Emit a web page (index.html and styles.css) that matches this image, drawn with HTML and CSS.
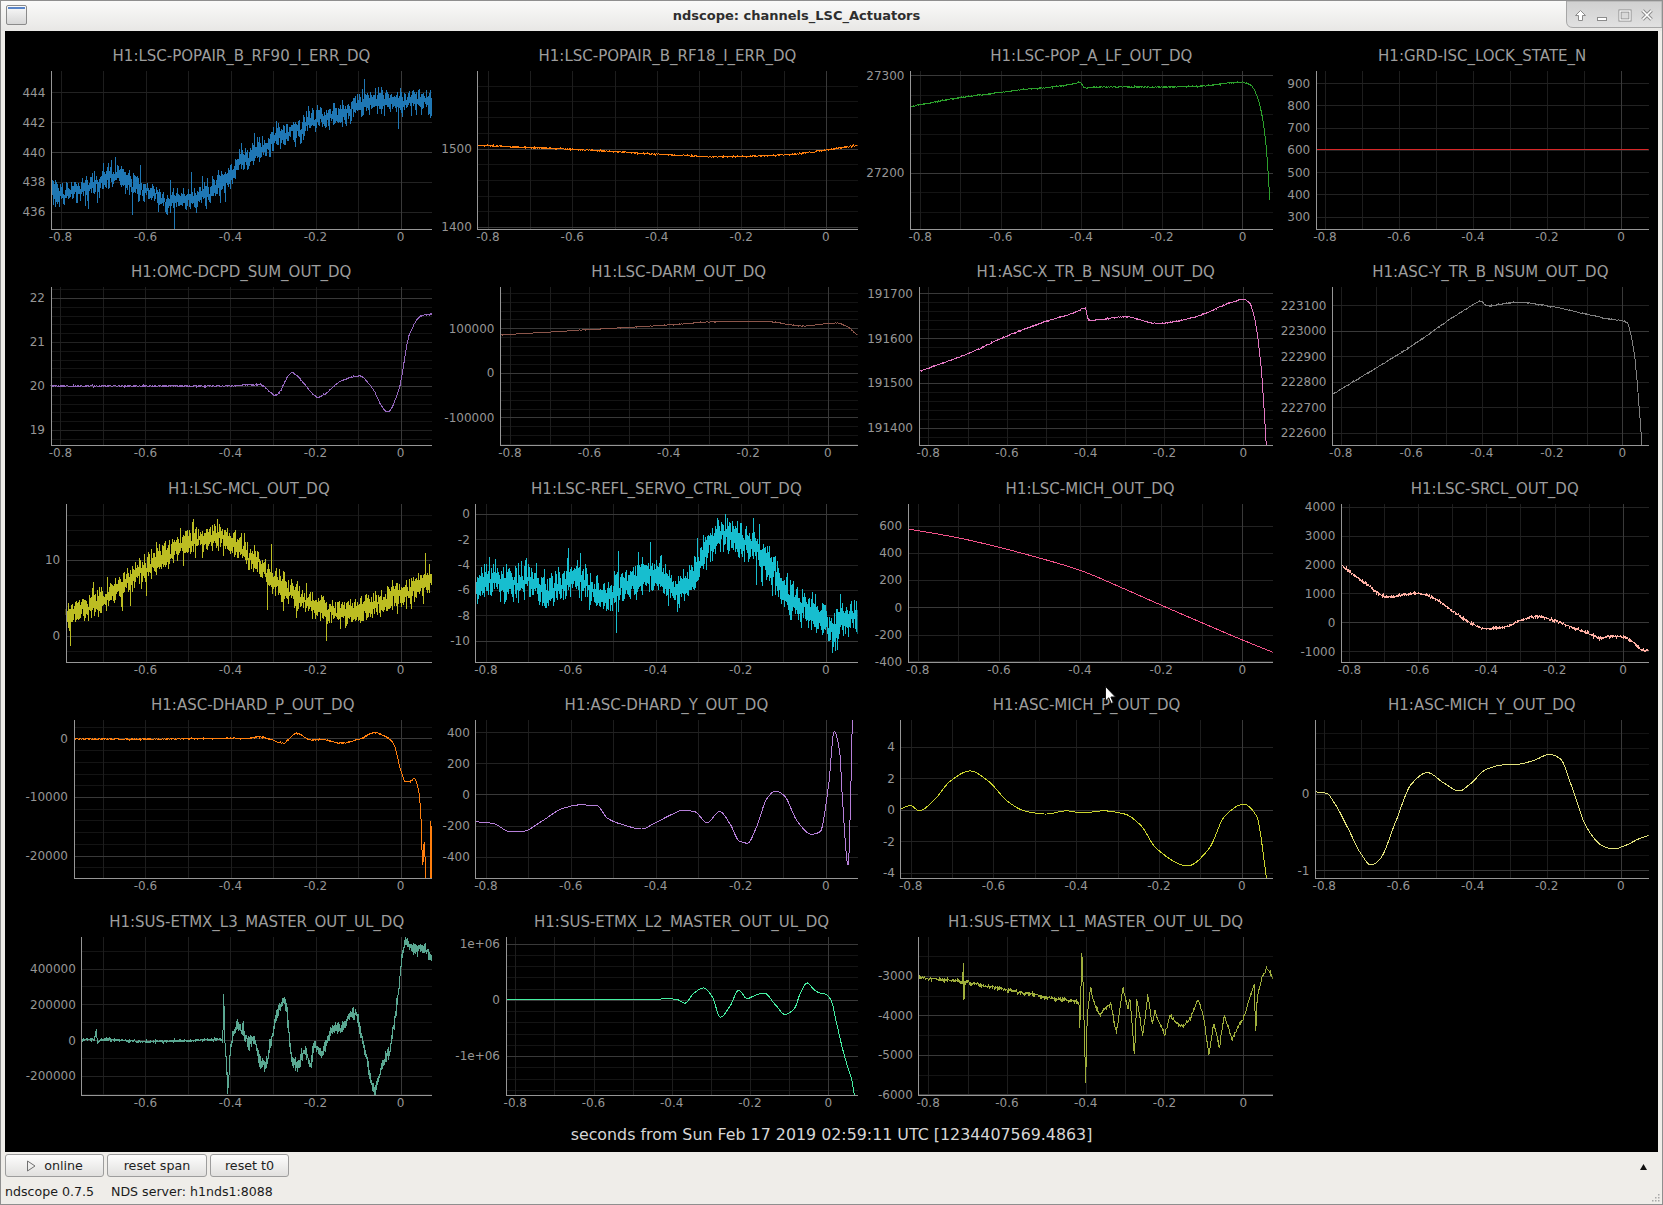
FILE: index.html
```html
<!DOCTYPE html>
<html lang="en">
<head>
<meta charset="utf-8">
<title>ndscope: channels_LSC_Actuators</title>
<link rel="stylesheet" href="styles.css">
</head>
<body>
<div class="window">
  <div class="titlebar">
    <div class="win-icon">
      <svg width="21" height="20" viewBox="0 0 21 20"><defs><linearGradient id="wi" x1="0" y1="0" x2="0" y2="1"><stop offset="0" stop-color="#fbfbfb"/><stop offset="1" stop-color="#d6d6d6"/></linearGradient></defs><rect x="0.5" y="0.5" width="20" height="19" rx="1.5" fill="url(#wi)" stroke="#8a8a8a"/><rect x="2" y="2" width="17" height="2" fill="#5a85c8"/></svg>
    </div>
    <div class="win-title">ndscope: channels_LSC_Actuators</div>
    <div class="win-controls">
      <svg width="96" height="27" viewBox="0 0 96 27"><defs><linearGradient id="wc" x1="0" y1="0" x2="0" y2="1"><stop offset="0" stop-color="#d0d0d0"/><stop offset="1" stop-color="#e1e1e1"/></linearGradient></defs><path d="M0.5,0 V20 Q0.5,26.5 7,26.5 H96 V0 Z" fill="url(#wc)" stroke="#a6a6a6"/><path d="M14.5,9.5 L19.5,14.5 H16.5 V19.5 H12.5 V14.5 H9.5 Z" fill="#fff" stroke="#8c8c8c"/><rect x="31.5" y="16.5" width="9" height="3" fill="#fff" stroke="#8c8c8c"/><rect x="54" y="10" width="10" height="9" fill="none" stroke="#8c8c8c" stroke-width="3"/><rect x="54" y="10" width="10" height="9" fill="none" stroke="#fff" stroke-width="1.3"/><path d="M76.5,9.5 L85.5,18.5 M85.5,9.5 L76.5,18.5" stroke="#8c8c8c" stroke-width="3.6"/><path d="M76.5,9.5 L85.5,18.5 M85.5,9.5 L76.5,18.5" stroke="#fff" stroke-width="1.6"/></svg>
    </div>
  </div>
  <div class="main">
    <div class="scope">
      <div class="plots">
        <div class="plot c1"><div class="plot-title">H1:LSC-POPAIR_B_RF90_I_ERR_DQ</div><svg class="plot-svg"></svg></div>
        <div class="plot c2"><div class="plot-title">H1:LSC-POPAIR_B_RF18_I_ERR_DQ</div><svg class="plot-svg"></svg></div>
        <div class="plot c3"><div class="plot-title">H1:LSC-POP_A_LF_OUT_DQ</div><svg class="plot-svg"></svg></div>
        <div class="plot c4"><div class="plot-title">H1:GRD-ISC_LOCK_STATE_N</div><svg class="plot-svg"></svg></div>

        <div class="plot c1"><div class="plot-title">H1:OMC-DCPD_SUM_OUT_DQ</div><svg class="plot-svg"></svg></div>
        <div class="plot c2"><div class="plot-title">H1:LSC-DARM_OUT_DQ</div><svg class="plot-svg"></svg></div>
        <div class="plot c3"><div class="plot-title">H1:ASC-X_TR_B_NSUM_OUT_DQ</div><svg class="plot-svg"></svg></div>
        <div class="plot c4"><div class="plot-title">H1:ASC-Y_TR_B_NSUM_OUT_DQ</div><svg class="plot-svg"></svg></div>

        <div class="plot c1"><div class="plot-title">H1:LSC-MCL_OUT_DQ</div><svg class="plot-svg"></svg></div>
        <div class="plot c2"><div class="plot-title">H1:LSC-REFL_SERVO_CTRL_OUT_DQ</div><svg class="plot-svg"></svg></div>
        <div class="plot c3"><div class="plot-title">H1:LSC-MICH_OUT_DQ</div><svg class="plot-svg"></svg></div>
        <div class="plot c4"><div class="plot-title">H1:LSC-SRCL_OUT_DQ</div><svg class="plot-svg"></svg></div>

        <div class="plot c1"><div class="plot-title">H1:ASC-DHARD_P_OUT_DQ</div><svg class="plot-svg"></svg></div>
        <div class="plot c2"><div class="plot-title">H1:ASC-DHARD_Y_OUT_DQ</div><svg class="plot-svg"></svg></div>
        <div class="plot c3"><div class="plot-title">H1:ASC-MICH_P_OUT_DQ</div><svg class="plot-svg"></svg></div>
        <div class="plot c4"><div class="plot-title">H1:ASC-MICH_Y_OUT_DQ</div><svg class="plot-svg"></svg></div>

        <div class="plot c1"><div class="plot-title">H1:SUS-ETMX_L3_MASTER_OUT_UL_DQ</div><svg class="plot-svg"></svg></div>
        <div class="plot c2"><div class="plot-title">H1:SUS-ETMX_L2_MASTER_OUT_UL_DQ</div><svg class="plot-svg"></svg></div>
        <div class="plot c3"><div class="plot-title">H1:SUS-ETMX_L1_MASTER_OUT_UL_DQ</div><svg class="plot-svg"></svg></div>
        <div class="plot-empty"></div>
      </div>
      <div class="xlabel">seconds from Sun Feb 17 2019 02:59:11 UTC [1234407569.4863]</div>
    </div>
    <div class="toolbar">
      <button class="btn btn-online" type="button"><svg width="10" height="12" viewBox="0 0 10 12"><path d="M1.5,1 L9,6 L1.5,11 Z" fill="none" stroke="#707070"/></svg><span>online</span></button>
      <button class="btn btn-span" type="button">reset span</button>
      <button class="btn btn-t0" type="button">reset t0</button>
      <span class="dock-arrow"><svg width="7" height="6" viewBox="0 0 7 6"><path d="M0,6 L3.5,0 L7,6 Z" fill="#111"/></svg></span>
    </div>
    <div class="status"><span>ndscope 0.7.5</span><span class="server">NDS server: h1nds1:8088</span></div>
  </div>
  <svg class="cursor" width="13" height="21" viewBox="0 0 13 21"><path d="M1.5,1.5 L1.5,16 L4.8,12.8 L7.2,18.5 L9.3,17.6 L6.9,12 L11.5,12 Z" fill="#fff" stroke="#111" stroke-linejoin="round"/></svg>
  <svg class="grip" width="11" height="11" viewBox="0 0 11 11"><g fill="#a9a9a9"><rect x="8" y="2" width="1.5" height="1.5"/><rect x="5" y="5" width="1.5" height="1.5"/><rect x="8" y="5" width="1.5" height="1.5"/><rect x="2" y="8" width="1.5" height="1.5"/><rect x="5" y="8" width="1.5" height="1.5"/><rect x="8" y="8" width="1.5" height="1.5"/></g></svg>
</div>
<script src="app.js"></script>
</body>
</html>
```

FILE: styles.css
```css
* { box-sizing: border-box; }
html, body { margin: 0; padding: 0; }
body {
  width: 1663px;
  height: 1205px;
  overflow: hidden;
  background: #efede9;
  font-family: "DejaVu Sans", "Liberation Sans", sans-serif;
}
.window {
  position: relative;
  width: 1663px;
  height: 1205px;
  border: 1px solid #8f8f8f;
  background: #efede9;
  display: flex;
  flex-direction: column;
}
.titlebar {
  flex: none;
  height: 30px;
  display: flex;
  background: linear-gradient(#fafaf9, #e8e7e5);
}
.win-icon { flex: none; width: 26px; padding: 4px 0 0 5px; }
.win-icon svg { display: block; }
.win-title {
  flex: 1;
  text-align: center;
  font-size: 13px;
  font-weight: bold;
  line-height: 29px;
  color: #2e2e2e;
  white-space: nowrap;
}
.win-controls { flex: none; width: 96px; height: 27px; }
.win-controls svg { display: block; }

.main {
  flex: 1;
  min-height: 0;
  display: flex;
  flex-direction: column;
  padding: 0 4px;
}
.scope {
  flex: none;
  height: 1121px;
  background: #000;
  display: flex;
  flex-direction: column;
}
.plots {
  display: grid;
  grid-template-columns: 432px 425px 415px 381px;
  grid-template-rows: 216px 217px 216px 217px 216px;
}
.plot { display: flex; flex-direction: column; min-width: 0; min-height: 0; }
.c1 { --r: 5px; }
.c2 { --r: 4.5px; }
.c3 { --r: 4.3px; }
.c4 { --r: 9.3px; }
.plot-title {
  flex: none;
  height: 40px;
  padding: 17px var(--r) 0 var(--l, 40px);
  font-size: 15px;
  line-height: 16px;
  color: #9d9d9d;
  text-align: center;
  white-space: nowrap;
}
.plot-svg { display: block; width: 100%; flex: 1; overflow: visible; }
.plot-svg text {
  font-family: "DejaVu Sans", sans-serif;
  font-size: 12px;
  fill: #969696;
}
.xlabel {
  flex: 1;
  padding-top: 14px;
  font-size: 15.85px;
  line-height: 16px;
  text-align: center;
  color: #d6d6d6;
  white-space: nowrap;
}

.toolbar {
  flex: none;
  height: 27px;
  display: flex;
  align-items: flex-start;
  padding-top: 2px;
  gap: 3px;
}
.btn {
  height: 23px;
  margin: 0;
  padding: 0;
  border: 1px solid #9d9d9d;
  border-radius: 3px;
  background: linear-gradient(#fdfdfd, #e1e0de);
  font-family: "DejaVu Sans", sans-serif;
  font-size: 12.7px;
  color: #1e1e1e;
  display: flex;
  align-items: center;
  justify-content: center;
  gap: 8px;
}
.btn svg { display: block; }
.btn-online { width: 99px; }
.btn-span { width: 100px; }
.btn-t0 { width: 79px; }
.dock-arrow { margin-left: auto; margin-right: 11px; margin-top: 10px; }
.dock-arrow svg { display: block; }

.status {
  flex: 1;
  padding-top: 2px;
  font-size: 12.6px;
  line-height: 22px;
  color: #1b1b1b;
  white-space: nowrap;
}
.server { margin-left: 17px; }

.cursor { position: absolute; left: 1103px; top: 684px; }
.grip { position: absolute; right: 1px; bottom: 1px; }
```

FILE: app.js
```js
(function () {
  'use strict';
  var PH = 158;
  var COLR = [427, 420.5, 410.7, 371.7];
  var XMAX = [0.0741, 0.075, 0.075, 0.075];
  var GRID = { b: '#393939', l: '#222222', f: '#141414', x: '#1d1d1d' };

  var CFG = [
    /* row 1 */
    { L: 45.9, xmin: -0.8226, y: [434.87, 445.42], yl: 2, yb: 10, c: '#1f77b4', n: 1800, ns: 0.38, sp: 0.08,
      pts: [[-0.823,437.2],[-0.783,437.3],[-0.744,437.5],[-0.705,438.0],[-0.666,438.4],[-0.627,437.8],[-0.588,437.3],[-0.549,436.8],[-0.51,436.8],[-0.471,437.0],[-0.432,437.7],[-0.393,438.7],[-0.378,439.5],[-0.354,439.7],[-0.315,440.5],[-0.277,441.2],[-0.238,441.5],[-0.199,442.2],[-0.16,442.4],[-0.121,442.8],[-0.082,443.3],[-0.043,443.4],[-0.004,443.3],[0.035,443.5],[0.075,443.3]] },
    { L: 40.3, y: [1397.5, 1598.7], yl: 100, yb: 100, yf: 20, c: '#ff7f0e', n: 700, ns: 0.5,
      pts: [[-0.825,1504],[-0.6,1499],[-0.4,1493],[-0.25,1489.5],[-0.1,1492],[0.075,1504]] },
    { L: 48, y: [27142.5, 27304.4], yl: 100, yb: 100, yf: 20, c: '#2ca02c', n: 700, ns: 0.35,
      pts: [[-0.825,27268],[-0.7,27277],[-0.55,27285],[-0.42,27291],[-0.403,27293],[-0.392,27287],[-0.36,27288],[-0.2,27288],[-0.1,27289],[0,27293],[0.02,27290],[0.035,27280],[0.047,27262],[0.059,27226],[0.068,27172]] },
    { L: 38.7, y: [244.7, 955], yl: 100, yb: 1000, c: '#d62728', n: 2, m: 'l',
      pts: [[-0.83,600],[0.08,600]] },
    /* row 2 */
    { L: 45.5, xmin: -0.8235, y: [18.66, 22.25], yl: 1, yb: 2, yf: 0.2, c: '#9467bd', n: 800, ns: 0.008,
      pts: [[-0.825,20],[-0.4,20],[-0.36,20.03],[-0.33,20.03],[-0.294,19.79],[-0.255,20.3],[-0.222,20.0],[-0.195,19.75],[-0.136,20.13],[-0.096,20.23],[-0.07,20],[-0.03,19.41],[-0.004,19.92],[0.022,21.2],[0.05,21.6],[0.075,21.64]] },
    { L: 63, y: [-162000, 193000], yl: 100000, yb: 100000, yf: 20000, c: '#8c564b', n: 600, ns: 400,
      pts: [[-0.825,85200],[-0.6,97100],[-0.39,108300],[-0.28,115000],[-0.15,115000],[-0.064,105400],[0.021,112100],[0.045,106000],[0.075,85200]] },
    { L: 56.5, y: [191361, 191714.5], yl: 100, yb: 100, yf: 20, c: '#e377c2', n: 700, ns: 0.6,
      pts: [[-0.825,191525],[-0.7,191565],[-0.6,191605],[-0.5,191638],[-0.42,191660],[-0.402,191668],[-0.392,191640],[-0.35,191643],[-0.3,191648],[-0.22,191633],[-0.12,191648],[-0.03,191680],[0,191687],[0.015,191680],[0.03,191640],[0.045,191540],[0.056,191400],[0.06,191340]] },
    { L: 55, y: [222553, 223172], yl: 100, yb: 1000, c: '#7f7f7f', n: 700, ns: 1,
      pts: [[-0.825,222750],[-0.6,222940],[-0.45,223080],[-0.4,223115],[-0.385,223098],[-0.3,223112],[-0.2,223095],[-0.1,223065],[-0.03,223045],[0.0,223040],[0.015,223030],[0.025,222980],[0.035,222900],[0.048,222700],[0.056,222553]] },
    /* row 3 */
    { L: 60.7, xmin: -0.7878, y: [-3.41, 17.39], yl: 10, yb: 10, yf: 2, c: '#bcbd22', n: 2200, ns: 0.8, sp: 0.08,
      pts: [[-0.79,2.3],[-0.7,5],[-0.6,8.8],[-0.5,12.2],[-0.45,13],[-0.4,12.4],[-0.3,7.6],[-0.2,3.9],[-0.14,3],[-0.08,3.7],[0,5.3],[0.075,7.4]] },
    { L: 38.3, y: [-11.67, 0.78], yl: 2, yb: 10, c: '#17becf', n: 2200, ns: 0.62, sp: 0.08,
      pts: [[-0.825,-5.7],[-0.78,-5.2],[-0.74,-5.6],[-0.7,-5.2],[-0.66,-6.4],[-0.6,-5.2],[-0.56,-5.6],[-0.53,-6.5],[-0.47,-5.6],[-0.42,-4.7],[-0.38,-5.2],[-0.35,-6.1],[-0.31,-4.8],[-0.27,-2.2],[-0.24,-1.6],[-0.2,-1.9],[-0.16,-2.8],[-0.12,-4.6],[-0.09,-6.5],[-0.05,-7.5],[-0.01,-8.2],[0.02,-9.2],[0.04,-8.4],[0.075,-7.9]] },
    { L: 45.6, y: [-400, 758], yl: 200, yb: 1000, c: '#f4528a', n: 600,
      pts: [[-0.825,576],[-0.7,510],[-0.6,441],[-0.5,362],[-0.4,272],[-0.3,148],[-0.2,17],[-0.1,-112],[0,-238],[0.075,-328]] },
    { L: 63.8, y: [-1373, 4093], yl: 1000, yb: 5000, c: '#ffb0a4', n: 800, ns: 22,
      pts: [[-0.825,1985],[-0.75,1330],[-0.69,880],[-0.6,1003],[-0.55,810],[-0.5,405],[-0.45,0],[-0.4,-227],[-0.35,-172],[-0.3,60],[-0.25,198],[-0.2,60],[-0.15,-172],[-0.1,-400],[-0.07,-540],[-0.03,-483],[0,-518],[0.03,-690],[0.06,-978],[0.075,-960]] },
    /* row 4 */
    { L: 68.5, xmin: -0.7694, y: [-23800, 3120], yl: 10000, yb: 10000, yf: 2000, c: '#ff7f0e', n: 800, ns: 50,
      pts: [[-0.769,-100],[-0.6,-150],[-0.5,-50],[-0.4,0],[-0.36,-50],[-0.335,280],[-0.31,-100],[-0.277,-850],[-0.244,850],[-0.21,-300],[-0.18,-200],[-0.144,-850],[-0.097,-150],[-0.06,960],[-0.037,400],[-0.017,-850],[0.003,-6000],[0.012,-7400],[0.025,-7300],[0.032,-6800],[0.043,-9100],[0.049,-14800],[0.052,-21600],[0.056,-17600],[0.06,-24500],[0.07,-24500],[0.071,-13300],[0.074,-24500]] },
    { L: 38.3, y: [-537, 479], yl: 200, yb: 1000, c: '#b57fd8', n: 800,
      pts: [[-0.825,-175],[-0.783,-186],[-0.743,-240],[-0.711,-236],[-0.671,-176],[-0.618,-89],[-0.579,-67],[-0.539,-72],[-0.513,-154],[-0.474,-197],[-0.434,-222],[-0.401,-182],[-0.362,-128],[-0.336,-102],[-0.309,-110],[-0.279,-181],[-0.25,-110],[-0.224,-195],[-0.204,-298],[-0.184,-313],[-0.164,-218],[-0.138,-25],[-0.118,22],[-0.099,-3],[-0.066,-175],[-0.033,-256],[-0.013,-239],[0.007,61],[0.02,404],[0.033,275],[0.039,-3],[0.053,-454],[0.059,-3],[0.063,490],[0.066,700]] },
    { L: 38.4, y: [-4.34, 5.71], yl: 2, yb: 10, c: '#cbd42e', n: 800,
      pts: [[-0.825,0.05],[-0.8,0.27],[-0.78,-0.07],[-0.746,0.55],[-0.703,1.85],[-0.657,2.47],[-0.614,1.85],[-0.563,0.48],[-0.525,-0.07],[-0.474,-0.27],[-0.423,-0.07],[-0.385,-0.2],[-0.334,-0.07],[-0.283,-0.27],[-0.245,-0.96],[-0.206,-2.47],[-0.13,-3.56],[-0.079,-2.47],[-0.041,-0.41],[0.005,0.35],[0.036,-0.41],[0.061,-4.5]] },
    { L: 38, y: [-1.1, 0.97], yl: 1, yb: 1, yf: 0.2, c: '#e2e27c', n: 700,
      pts: [[-0.825,0.03],[-0.794,0.01],[-0.771,-0.13],[-0.737,-0.44],[-0.7,-0.79],[-0.674,-0.93],[-0.651,-0.86],[-0.608,-0.37],[-0.565,0.13],[-0.522,0.28],[-0.479,0.15],[-0.436,0.04],[-0.407,0.13],[-0.364,0.32],[-0.321,0.38],[-0.278,0.39],[-0.235,0.44],[-0.192,0.52],[-0.163,0.46],[-0.135,0.13],[-0.092,-0.44],[-0.049,-0.68],[-0.02,-0.72],[0.009,-0.68],[0.052,-0.58],[0.077,-0.54]] },
    /* row 5 */
    { L: 76.4, xmin: -0.7508, y: [-306000, 576000], yl: 200000, yb: 1000000, yf: 100000, c: '#5aa892', n: 1400, m: 'l', ns: [[-1, 2500], [-0.42, 17000]], sp: 0.05,
      pts: [[-0.756,5000],[-0.72,3000],[-0.716,60000],[-0.713,-20000],[-0.705,5000],[-0.6,-9000],[-0.5,-2000],[-0.423,5000],[-0.418,0],[-0.416,240000],[-0.412,-50000],[-0.406,-280000],[-0.4,-50000],[-0.39,70000],[-0.383,90000],[-0.363,10000],[-0.343,0],[-0.33,-120000],[-0.317,-140000],[-0.303,0],[-0.29,150000],[-0.277,220000],[-0.267,180000],[-0.257,-100000],[-0.243,-150000],[-0.223,-50000],[-0.213,-160000],[-0.204,-30000],[-0.184,-80000],[-0.164,50000],[-0.15,80000],[-0.137,60000],[-0.117,150000],[-0.104,140000],[-0.084,-50000],[-0.07,-220000],[-0.061,-300000],[-0.044,-150000],[-0.024,-50000],[-0.011,150000],[0.003,450000],[0.012,560000],[0.029,500000],[0.049,520000],[0.069,470000],[0.076,440000]] },
    { L: 68.5, y: [-1693000, 1117000], yl: 1000000, yb: 1000000, yf: 200000, c: '#45eea2', n: 800, fmt: 'e',
      pts: [[-0.825,0],[-0.471,0],[-0.464,10000],[-0.4,15000],[-0.386,5000],[-0.367,-60000],[-0.343,120000],[-0.319,210000],[-0.296,50000],[-0.276,-310000],[-0.25,-100000],[-0.229,170000],[-0.207,20000],[-0.193,60000],[-0.164,120000],[-0.136,-80000],[-0.11,-260000],[-0.086,-150000],[-0.071,120000],[-0.054,300000],[-0.036,180000],[-0.021,120000],[-0.007,100000],[0.007,0],[0.021,-400000],[0.036,-850000],[0.05,-1200000],[0.061,-1450000],[0.068,-1750000]] },
    { L: 56.3, y: [-6018, -2013], yl: 1000, yb: 1000, yf: 500, c: '#9fae3c', n: 700, m: 'l', ns: 25,
      pts: [[-0.825,-3030],[-0.762,-3090],[-0.712,-3150],[-0.711,-2700],[-0.709,-3600],[-0.707,-3160],[-0.636,-3280],[-0.566,-3420],[-0.497,-3550],[-0.427,-3650],[-0.417,-3700],[-0.415,-4300],[-0.413,-3800],[-0.41,-2400],[-0.407,-3000],[-0.4,-5700],[-0.396,-4000],[-0.387,-3300],[-0.378,-3700],[-0.364,-4000],[-0.35,-3800],[-0.336,-3700],[-0.322,-4450],[-0.305,-3300],[-0.294,-3800],[-0.287,-3600],[-0.276,-5000],[-0.27,-3600],[-0.255,-4500],[-0.242,-3500],[-0.231,-4200],[-0.224,-3900],[-0.199,-4500],[-0.186,-4000],[-0.178,-4100],[-0.168,-4200],[-0.154,-4300],[-0.133,-4050],[-0.115,-3600],[-0.101,-4000],[-0.087,-5000],[-0.074,-4200],[-0.06,-4800],[-0.048,-4000],[-0.038,-4300],[-0.028,-4600],[-0.014,-4300],[0.004,-4000],[0.018,-3500],[0.028,-3200],[0.032,-4400],[0.036,-3500],[0.049,-3000],[0.06,-2800],[0.07,-2950],[0.076,-3100]] }
  ];

  function rng(seed) {
    return function () {
      seed |= 0; seed = seed + 0x6D2B79F5 | 0;
      var t = Math.imul(seed ^ seed >>> 15, 1 | seed);
      t = t + Math.imul(t ^ t >>> 7, 61 | t) ^ t;
      return ((t ^ t >>> 14) >>> 0) / 4294967296;
    };
  }
  function gauss(r) {
    var u = 1 - r(), v = r();
    var g = Math.sqrt(-2 * Math.log(u)) * Math.cos(2 * Math.PI * v);
    if (g > 2.6) g = 2.6;
    if (g < -2.6) g = -2.6;
    return g;
  }

  function makeFn(pts, mode) {
    var n = pts.length, xs = [], ys = [], i;
    for (i = 0; i < n; i++) { xs.push(pts[i][0]); ys.push(pts[i][1]); }
    function seg(x) { var k = 0; while (k < n - 2 && x > xs[k + 1]) k++; return k; }
    if (mode === 'l' || n < 3) {
      return function (x) {
        var k = seg(x), t = (x - xs[k]) / (xs[k + 1] - xs[k]);
        return ys[k] + t * (ys[k + 1] - ys[k]);
      };
    }
    var d = [], m = [];
    for (i = 0; i < n - 1; i++) d.push((ys[i + 1] - ys[i]) / (xs[i + 1] - xs[i]));
    m[0] = d[0]; m[n - 1] = d[n - 2];
    for (i = 1; i < n - 1; i++) {
      if (d[i - 1] * d[i] <= 0) { m[i] = 0; }
      else {
        var h0 = xs[i] - xs[i - 1], h1 = xs[i + 1] - xs[i];
        var w1 = 2 * h1 + h0, w2 = h1 + 2 * h0;
        m[i] = (w1 + w2) / (w1 / d[i - 1] + w2 / d[i]);
      }
    }
    return function (x) {
      var k = seg(x), h = xs[k + 1] - xs[k], t = (x - xs[k]) / h, t2 = t * t, t3 = t2 * t;
      return (2 * t3 - 3 * t2 + 1) * ys[k] + (t3 - 2 * t2 + t) * h * m[k] +
             (-2 * t3 + 3 * t2) * ys[k + 1] + (t3 - t2) * h * m[k + 1];
    };
  }

  function noiseAt(ns, x) {
    if (!ns) return 0;
    if (typeof ns === 'number') return ns;
    var s = 0;
    for (var i = 0; i < ns.length; i++) if (x >= ns[i][0]) s = ns[i][1];
    return s;
  }

  function isMult(v, s) {
    if (!s) return false;
    var q = v / s;
    return Math.abs(q - Math.round(q)) < 1e-6;
  }

  function fmtY(v, c) {
    if (c.fmt === 'e') {
      if (Math.abs(v) < 1e-9) return '0';
      var e = Math.round(Math.log(Math.abs(v)) / Math.LN10);
      var mant = Math.round(v / Math.pow(10, e));
      return mant + 'e+' + (e < 10 ? '0' : '') + e;
    }
    var s = Math.round(v * 1e6) / 1e6;
    if (s === 0) s = 0;
    return String(s);
  }

  function build(svg, c, col, idx) {
    var R = COLR[col], L = c.L;
    var xmin = (c.xmin != null) ? c.xmin : -0.825, xmax = XMAX[col];
    var bot = c.y[0], top = c.y[1];
    var sx = (R - L) / (xmax - xmin), sy = PH / (top - bot);
    function X(x) { return L + (x - xmin) * sx; }
    function Y(v) { return (top - v) * sy; }
    var Lp = Math.round(L) + 0.5, Rr = Math.round(R), Bp = PH + 0.5;
    var out = [];
    var k, v, i;

    out.push('<defs><clipPath id="cp' + idx + '"><rect x="' + L + '" y="0" width="' + (R - L) + '" height="' + PH + '"/></clipPath></defs>');

    /* grid */
    var faint = [], mid = [], bright = [];
    var steps = [c.yf, c.yl, c.yb].filter(function (s) { return !!s; });
    var fine = Math.min.apply(null, steps);
    var k0 = Math.ceil(bot / fine - 1e-9), k1 = Math.floor(top / fine + 1e-9);
    for (k = k0; k <= k1; k++) {
      v = k * fine;
      var py = Math.round(Y(v)) + 0.5;
      if (py > PH) py = PH - 0.5;
      var ln = 'M' + Lp + ' ' + py + 'H' + Rr;
      if (isMult(v, c.yb)) bright.push(ln);
      else if (isMult(v, c.yl)) mid.push(ln);
      else faint.push(ln);
    }
    var xk0 = Math.ceil(xmin * 10 - 1e-9), xk1 = Math.floor(xmax * 10 + 1e-9);
    var xl = [];
    for (k = xk0; k <= xk1; k++) {
      var px = Math.round(X(k / 10)) + 0.5;
      var vl = 'M' + px + ' 0V' + PH;
      if (k === 0) bright.push(vl); else xl.push(vl);
    }
    out.push('<g fill="none" shape-rendering="crispEdges">');
    if (faint.length) out.push('<path d="' + faint.join('') + '" stroke="' + GRID.f + '"/>');
    if (xl.length) out.push('<path d="' + xl.join('') + '" stroke="' + GRID.x + '"/>');
    if (mid.length) out.push('<path d="' + mid.join('') + '" stroke="' + GRID.l + '"/>');
    if (bright.length) out.push('<path d="' + bright.join('') + '" stroke="' + GRID.b + '"/>');
    out.push('</g>');

    /* trace */
    var fn = makeFn(c.pts, c.m);
    var r = rng(1234 + idx * 7919);
    var xa = Math.max(c.pts[0][0], xmin), xb = Math.min(c.pts[c.pts.length - 1][0], xmax + 0.004);
    var xs = [];
    for (i = 0; i <= c.n; i++) xs.push(xa + (xb - xa) * i / c.n);
    if (c.m === 'l') {
      c.pts.forEach(function (p) { if (p[0] > xa && p[0] < xb) xs.push(p[0]); });
      xs.sort(function (a, b) { return a - b; });
    }
    var d = [];
    for (i = 0; i < xs.length; i++) {
      var x = xs[i];
      v = fn(x);
      var s = noiseAt(c.ns, x);
      if (s) {
        var g = gauss(r);
        if (c.sp && r() < c.sp) g *= 1.5 + r() * 0.9;
        v += g * s;
      }
      var tx = X(x), ty = Y(v);
      if (ty < -60) ty = -60;
      if (ty > PH + 60) ty = PH + 60;
      d.push((i ? 'L' : 'M') + tx.toFixed(2) + ' ' + ty.toFixed(2));
    }
    out.push('<path d="' + d.join('') + '" fill="none" stroke="' + c.c + '" stroke-width="1" clip-path="url(#cp' + idx + ')" shape-rendering="crispEdges"/>');

    /* axes */
    out.push('<path d="M' + Lp + ' 0V' + Bp + 'H' + Rr + '" fill="none" stroke="#969696" shape-rendering="crispEdges"/>');

    /* y labels */
    var l0 = Math.ceil(bot / c.yl - 1e-9), l1 = Math.floor(top / c.yl + 1e-9);
    for (k = l0; k <= l1; k++) {
      v = k * c.yl;
      out.push('<text x="' + (L - 5.5).toFixed(1) + '" y="' + (Y(v) + 4.3).toFixed(1) + '" text-anchor="end">' + fmtY(v, c) + '</text>');
    }
    /* x labels */
    for (k = -4; k <= 0; k++) {
      var xv = k * 0.2;
      if (xv < xmin - 1e-6 || xv > xmax) continue;
      out.push('<text x="' + X(xv).toFixed(1) + '" y="' + (PH + 12.4) + '" text-anchor="middle">' + (k === 0 ? '0' : xv.toFixed(1)) + '</text>');
    }

    svg.innerHTML = out.join('');
  }

  var plots = document.querySelectorAll('.plot');
  for (var p = 0; p < plots.length && p < CFG.length; p++) {
    var el = plots[p];
    el.style.setProperty('--l', CFG[p].L + 'px');
    build(el.querySelector('.plot-svg'), CFG[p], p % 4, p);
  }
})();
```
